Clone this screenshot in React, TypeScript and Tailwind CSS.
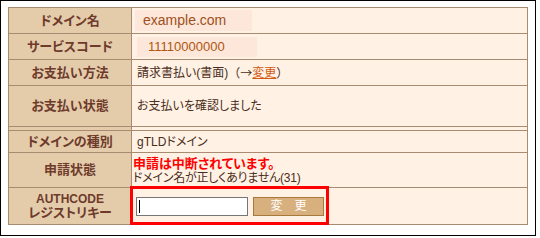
import React from 'react';

const label = "flex w-[123px] shrink-0 items-center justify-center border-r border-[#a88b70] bg-[#e4ccab] text-[13px] font-bold text-[#6e3b2b] [font-feature-settings:'palt']";
const value = "flex flex-1 items-center bg-[#fff2e5] text-[12px] text-[#4a2c20] [font-feature-settings:'palt']";
const row = "flex border-t border-[#a88b70]";
const cjk = "[font-family:'Noto_Sans_CJK_JP',sans-serif] [font-feature-settings:normal]";

export default function App() {
  return (
    <div className="h-[238px] w-[540px] bg-white" style={{ fontFamily: '"Liberation Sans", "Noto Sans CJK JP", sans-serif' }}>
      <div className="h-[236px] w-[536px] border border-black pl-[7px] pt-[6px]">
        <div className="w-[520px] border border-[#a88b70]">
          <div className="flex h-[25px]">
            <div className={label}>ドメイン名</div>
            <div className={value}>
              <div className="ml-[3px] flex h-[21px] w-[117px] items-center bg-[#fce7da] pl-[8px] text-[14px] text-[#a14f1c]">
                example.com
              </div>
            </div>
          </div>

          <div className={`${row} h-[26px]`}>
            <div className={label}>サービスコード</div>
            <div className={value}>
              <div className="ml-[5px] flex h-[20px] w-[120px] items-center bg-[#fce7da] pl-[11px] text-[13px] text-[#b0560f]">
                11110000000
              </div>
            </div>
          </div>

          <div className={`${row} h-[26px]`}>
            <div className={label}>お支払い方法</div>
            <div className={`${value} pl-[5px]`}>
              請求書払い(書面)<span className={cjk}>（→</span>
              <span className="text-[#d35a12] underline">変更</span>
              <span className={cjk}>）</span>
            </div>
          </div>

          <div className={`${row} h-[41px]`}>
            <div className={label}>お支払い状態</div>
            <div className={`${value} pl-[5px]`}>お支払いを確認しました</div>
          </div>

          <div className={`${row} h-[4px]`}>
            <div className={label} />
            <div className={value} />
          </div>

          <div className={`${row} h-[22px]`}>
            <div className={label}>ドメインの種別</div>
            <div className={`${value} pl-[5px]`}>gTLDドメイン</div>
          </div>

          <div className={`${row} h-[35px]`}>
            <div className={label}>申請状態</div>
            <div className={`${value} flex-col !items-start justify-center pl-[1px]`}>
              <span className="text-[13px] leading-[15px] font-bold text-[#ff0000]">申請は中断されています。</span>
              <span className="leading-[14px] tracking-[-0.02em]">ドメイン名が正しくありません(31)</span>
            </div>
          </div>

          <div className={`${row} h-[37px]`}>
            <div className={`${label} flex-col leading-[14px]`}>
              <span className="text-[12px]">AUTHCODE</span>
              <span>レジストリキー</span>
            </div>
            <div className={`${value} relative pl-[4px]`}>
              <div className="relative h-[19px] w-[112px] border border-[#767676] bg-white">
                <span className="absolute left-[2px] top-[2px] h-[13px] w-px bg-black" />
              </div>
              <button className="ml-[5px] h-[19px] w-[71px] border border-[#a8783c] bg-[#d8b07e] text-[12px] leading-none text-white">
                変　更
              </button>
              <div className="pointer-events-none absolute left-[-2px] top-[-2px] h-[39px] w-[199px] border-[3px] border-[#ff0000]" />
            </div>
          </div>
        </div>
      </div>
    </div>
  );
}
